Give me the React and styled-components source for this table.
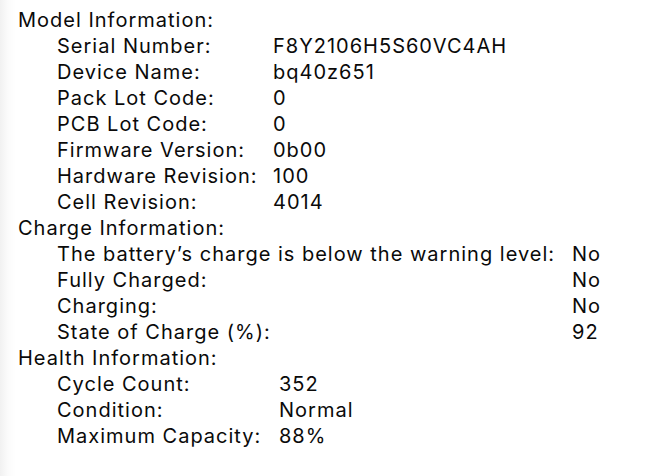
import React from 'react'
import styled, { createGlobalStyle } from 'styled-components'

const GlobalStyle = createGlobalStyle`
  html, body {
    margin: 0;
    padding: 0;
    background: #fff;
  }
  body {
    font-family: Inter, "Liberation Sans", sans-serif;
    color: #0a0a0a;
  }
`

const Page = styled.div`
  width: 652px;
  height: 476px;
  box-sizing: border-box;
  padding: 7px 0 0 18px;
  background: linear-gradient(to right, #f1f1f1, #fbfbfb 8px, #fff 16px);
  font-size: 20px;
  line-height: 26px;
  letter-spacing: 1px;
  overflow: hidden;
`

const Section = styled.section`
  display: flex;
  flex-direction: column;
`

const Header = styled.div`
  white-space: nowrap;
`

const Table = styled.div`
  display: grid;
  grid-template-columns: ${props => props.labelWidth}px auto;
  margin-left: 39px;
`

const Label = styled.div`
  white-space: nowrap;
`

const Value = styled.div`
  white-space: nowrap;
`

const sections = [
  {
    title: 'Model Information:',
    labelWidth: 216,
    rows: [
      ['Serial Number:', 'F8Y2106H5S60VC4AH'],
      ['Device Name:', 'bq40z651'],
      ['Pack Lot Code:', '0'],
      ['PCB Lot Code:', '0'],
      ['Firmware Version:', '0b00'],
      ['Hardware Revision:', '100'],
      ['Cell Revision:', '4014'],
    ],
  },
  {
    title: 'Charge Information:',
    labelWidth: 515,
    rows: [
      ['The battery\u2019s charge is below the warning level:', 'No'],
      ['Fully Charged:', 'No'],
      ['Charging:', 'No'],
      ['State of Charge (%):', '92'],
    ],
  },
  {
    title: 'Health Information:',
    labelWidth: 222,
    rows: [
      ['Cycle Count:', '352'],
      ['Condition:', 'Normal'],
      ['Maximum Capacity:', '88%'],
    ],
  },
]

export default function App() {
  return (
    <>
      <GlobalStyle />
      <Page>
        {sections.map(section => (
          <Section key={section.title}>
            <Header>{section.title}</Header>
            <Table labelWidth={section.labelWidth}>
              {section.rows.map(([label, value]) => (
                <React.Fragment key={label}>
                  <Label>{label}</Label>
                  <Value>{value}</Value>
                </React.Fragment>
              ))}
            </Table>
          </Section>
        ))}
      </Page>
    </>
  )
}
